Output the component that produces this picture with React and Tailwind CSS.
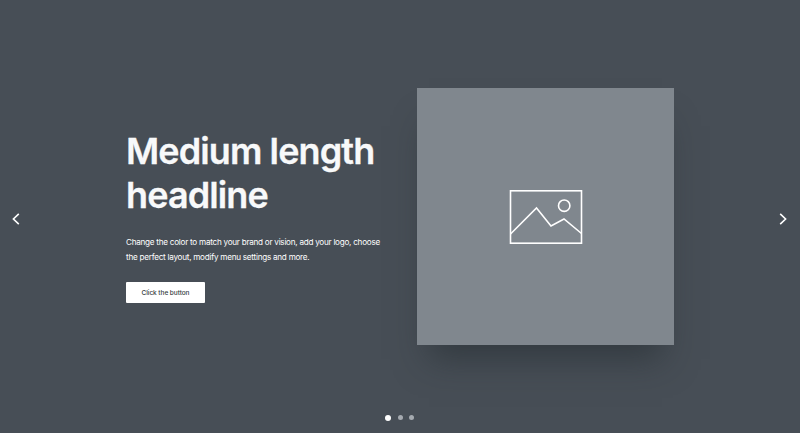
import React from 'react';

function Arrow({ flip }) {
  return (
    <button aria-label={flip ? 'Next slide' : 'Previous slide'} className="flex h-3 w-2 items-center justify-center">
      <svg viewBox="0 0 8 12" className={flip ? 'h-3 w-2 rotate-180' : 'h-3 w-2'} fill="none" stroke="white" strokeWidth="1.6">
        <path d="M6.8 0.9 1.4 6l5.4 5.1" />
      </svg>
    </button>
  );
}

export default function App() {
  return (
    <section className="flex h-[433px] w-[800px] flex-col overflow-hidden bg-[#474e56] font-['Inter',sans-serif] text-white">
      <div className="flex h-[345px] items-end pl-3 pr-[13px]">
        <div className="mb-[120px]"><Arrow /></div>
        <div className="ml-[106px] w-[291px] pb-[42px]">
          <h1 className="whitespace-nowrap text-[36px] font-semibold leading-[44px] tracking-[-0.9px] text-[#f8f9fa] [-webkit-text-stroke:0.3px_#f8f9fa]">
            Medium length<br />headline
          </h1>
          <p className="mt-[18px] whitespace-nowrap text-[8.15px] leading-[15px] tracking-[-0.25px]">
            Change the color to match your brand or vision, add your logo, choose<br />
            the perfect layout, modify menu settings and more.
          </p>
          <button className="mt-[17px] flex h-[21px] w-[79px] items-center justify-center rounded-[1px] bg-white pt-0.5 text-[6.5px] font-medium tracking-[-0.05px] text-[#343a40]">
            Click the button
          </button>
        </div>
        <div className="flex h-[257px] w-[257px] items-center justify-center bg-[#80878e] shadow-[0_26px_32px_-12px_rgba(33,40,45,0.52)]">
          <svg viewBox="0 0 74 56" className="h-14 w-[74px]" fill="none" stroke="white" strokeWidth="1.6">
            <rect x="1.5" y="1.8" width="71" height="52.4" />
            <path d="M1.5 45 27.5 19 42 37l13-7 17.5 14.5" />
            <circle cx="55.2" cy="16.7" r="5.7" />
          </svg>
        </div>
        <div className="mb-[120px] ml-auto"><Arrow flip /></div>
      </div>
      <div className="mt-[69.5px] flex items-center justify-center gap-[6.5px] pr-px">
        <span className="h-1.5 w-1.5 rounded-full bg-white" />
        <span className="h-[5px] w-[5px] rounded-full bg-[#a5aab0]" />
        <span className="h-[5px] w-[5px] rounded-full bg-[#a5aab0]" />
      </div>
    </section>
  );
}
